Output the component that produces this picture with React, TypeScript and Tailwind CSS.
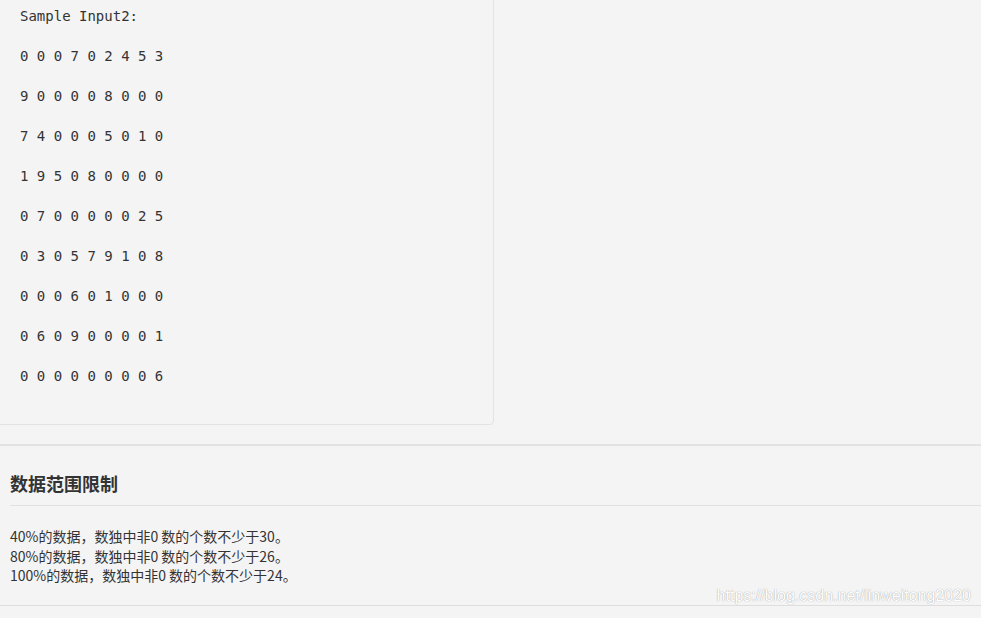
import React from "react";

const rows = [
  "0 0 0 7 0 2 4 5 3",
  "9 0 0 0 0 8 0 0 0",
  "7 4 0 0 0 5 0 1 0",
  "1 9 5 0 8 0 0 0 0",
  "0 7 0 0 0 0 0 2 5",
  "0 3 0 5 7 9 1 0 8",
  "0 0 0 6 0 1 0 0 0",
  "0 6 0 9 0 0 0 0 1",
  "0 0 0 0 0 0 0 0 6",
];

const limits = [
  "40%的数据，数独中非0 数的个数不少于30。",
  "80%的数据，数独中非0 数的个数不少于26。",
  "100%的数据，数独中非0 数的个数不少于24。",
];

function App() {
  return (
    <div className="relative h-[618px] w-[981px] overflow-hidden bg-[#f4f4f4] text-[#333]">
      {/* sample box */}
      <div className="-mt-[20px] -ml-[20px] w-[514px] rounded-[4px] border border-[#e3e3e3] pt-[25px] pb-[38px] pl-[39px]">
        <div
          className="text-[14px] leading-[20px] text-[#333]"
          style={{ fontFamily: '"DejaVu Sans Mono", "Liberation Mono", monospace' }}
        >
          <div>Sample Input2:</div>
          {rows.map((r, i) => (
            <div key={i} className="mt-[20px] whitespace-pre">
              {r}
            </div>
          ))}
        </div>
      </div>

      <div className="mt-[19px] h-[2px] bg-[#e2e2e2]" />

      <div style={{ fontFamily: '"Noto Sans CJK SC", "Liberation Sans", sans-serif' }}>
        <div className="pl-[10px] pt-[25px]">
          <h2 className="text-[18px] font-bold leading-[24px] text-[#333]">数据范围限制</h2>
          <div className="mt-[10px] h-px bg-[#e0e0e0]" />
        </div>
        <div className="px-[10px] pt-[21px] pb-[19px] text-[14px] leading-[19.5px] text-[#333]">
          {limits.map((t, i) => (
            <div key={i}>{t}</div>
          ))}
        </div>
        <div className="h-px bg-[#dedede]" />
      </div>

      <div
        className="absolute right-[10px] bottom-[10px] text-[16px] text-white"
        style={{ fontFamily: '"Liberation Sans", Arial, sans-serif', textShadow: "0 0 1px #8a8a8a" }}
      >
        https://blog.csdn.net/linweitong2020
      </div>
    </div>
  );
}

export default App;
